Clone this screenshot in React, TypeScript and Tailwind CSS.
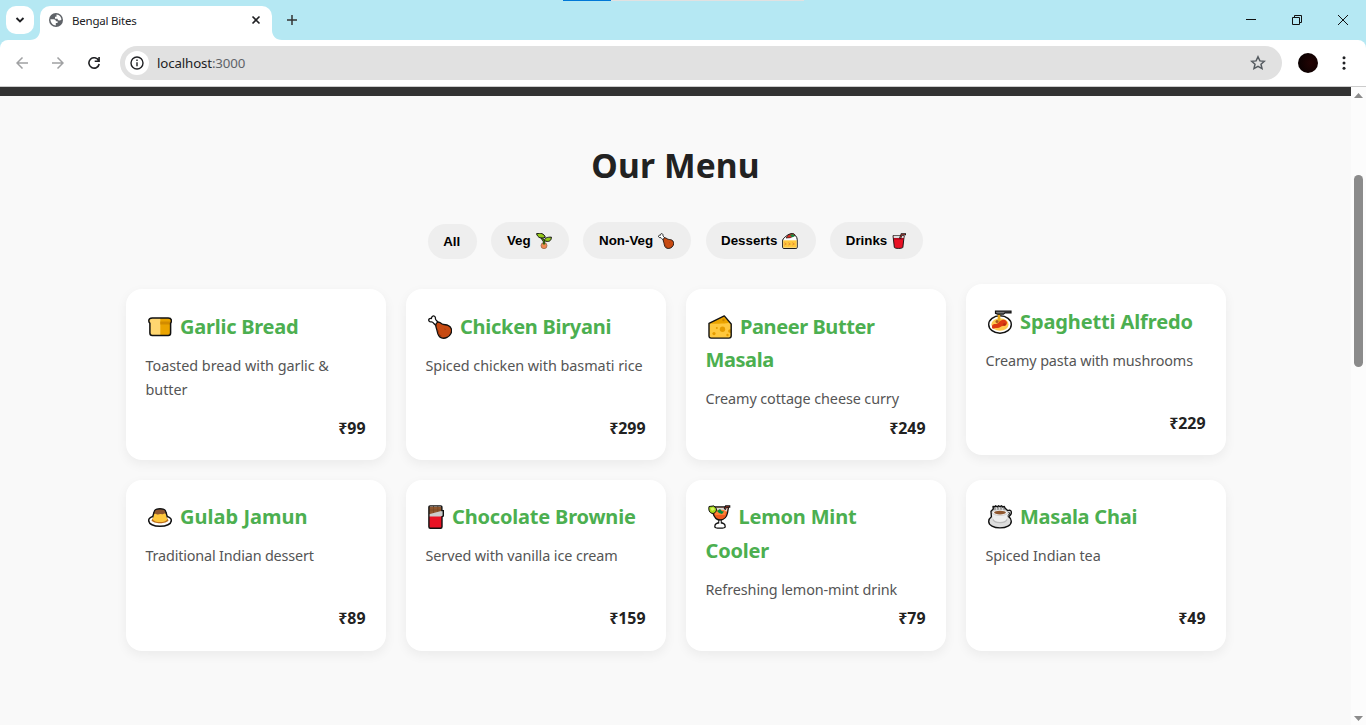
import type { ReactNode } from "react";

type IconName = "bread" | "drumstick" | "cheese" | "spaghetti" | "custard" | "chocolate" | "cocktail" | "coffee" | "sprout" | "cake" | "cup";

const drawings: Record<IconName, ReactNode> = {
  bread: (
    <>
      <path d="M4.300 2.900h15.900c2 0 3.200 1.200 3.200 2.800 0 1.200-.3 1.900-.8 2.500v9.800c0 1.600-.9 2.500-2.400 2.500H4.300c-1.500 0-2.400-.9-2.400-2.500V8.200C1.200 7.600.8 6.900.8 5.700c0-1.600 1.400-2.800 3.500-2.800z" fill="#eba400" />
      <path d="M4.300 3h8v17.500h-8c-1.500 0-2.400-.9-2.400-2.500V8.200L.8 5.700C.8 4.100 2.200 3 4.300 3z" fill="#ffd670" />
      <path d="M12.300 6.500H23v1.500l-1 1.500h-9.700z" fill="#d28b00" />
      <path d="M4.300 2.900h15.900c2 0 3.200 1.200 3.200 2.800 0 1.200-.3 1.900-.8 2.500v9.800c0 1.600-.9 2.500-2.400 2.500H4.300c-1.500 0-2.400-.9-2.400-2.500V8.200C1.200 7.600.8 6.900.8 5.700c0-1.600 1.400-2.800 3.500-2.800z" fill="none" stroke="#111" strokeWidth="1.500" />
    </>
  ),
  drumstick: (
    <g stroke="#111" strokeWidth="1.300" strokeLinejoin="round">
      <path d="M4.300 1.400c1.500-1.100 3.300 0 3.100 1.800-.1 1.100.4 1.700 1.300 2.600l2.700 3-2.800 2.500-3-3.100C4.900 7.200 4.300 6.700 3.100 6.900 1.400 7.100.1 5.400 1.100 4c.6-.7 1.400-.6 2.300-.5.200-.8.100-1.500.9-2.100z" fill="#fff" />
      <path d="M8.300 8.500c1.300-2.200 3.400-1.300 5.400.2 2 1.300 4.200.8 6.300 1.600 3.400 1.200 4.400 5.300 2.800 8.400-1.600 3.200-5.500 5.400-9.300 4.200-3.400-1-3.800-4-4.400-7-.5-2.700-2.200-5-.8-7.400z" fill="#c74a12" />
      <path d="M13.500 21c-2.700-.6-3-3.500-3.300-5.700M16.500 14l1 .4" stroke="#9d3508" strokeWidth="1" fill="none" />
    </g>
  ),
  cheese: (
    <>
      <path d="M1 8.300 16.300.9 23.200 9v11.800c0 1.500-.8 2.300-2.300 2.300H3.200C1.700 23.100 1 22.300 1 20.800z" fill="#ffc83d" />
      <path d="M1.500 8.200 16.200 1.200l5 6.300c-4 1.300-5 .8-7.700 1-3.500.2-8 .7-12-.3z" fill="#eba400" />
      <g fill="#e59c00"><circle cx="14.500" cy="14.200" r="2.700" /><circle cx="6" cy="18.600" r="1.600" /><circle cx="8.800" cy="13" r="1" /><circle cx="19.500" cy="20" r="1.200" /><path d="M23 18c-2 0-3-.8-2.800-2.200.2-1.300 1.500-1.500 2.800-1.500z" /></g>
      <circle cx="15.500" cy="5" r="1.200" fill="#c98500" />
      <path d="M1 8.300 16.300.9 23.200 9v11.800c0 1.500-.8 2.300-2.300 2.300H3.200C1.700 23.100 1 22.300 1 20.800z" fill="none" stroke="#111" strokeWidth="1.400" strokeLinejoin="round" />
    </>
  ),
  spaghetti: (
    <>
      <ellipse cx="12" cy="14.500" rx="11.300" ry="8.700" fill="#fff" stroke="#111" strokeWidth="1.400" />
      <ellipse cx="12" cy="14.500" rx="8.600" ry="6.200" fill="#ffc94f" />
      <path d="M11 1.800v10" stroke="#e8a71b" strokeWidth="2.600" />
      <path d="M4 17c0-3 2-3 4-3s3-3 6-4 5 1 5 3-2 3-4 3-3 2-6 2-5 2-5-1z" fill="#dd3a12" />
      <circle cx="9" cy="11.500" r="1.500" fill="#a85b20" /><circle cx="16.500" cy="14.500" r="1.300" fill="#b32b10" />
      <path d="M7.500 1.200H23v1.700h-6l-1.500 1.200h-6l-2-.8z" fill="#777" stroke="#111" strokeWidth="1.200" />
    </>
  ),
  custard: (
    <>
      <path d="M5 11.400c-2.600.8-4.300 2.100-4.300 4.100 0 3.500 5 5.800 11.300 5.800s11.300-2.300 11.300-5.800c0-2-1.700-3.300-4.300-4.100" fill="#fff" stroke="#111" strokeWidth="1.500" />
      <path d="M3.500 15.300c1.700 4 15.300 4 17 0L18 11.500H6z" fill="#bd701c" />
      <path d="M6.100 7h11.800l1.300 7.500c-1.500 3.400-12.900 3.400-14.400 0z" fill="#ffc83d" />
      <path d="M6 8.900c.3-2.800.8-4.200 2-4.400 2-.7 6-.7 8 0 1.200.3 1.700 1.500 2 4.400-1.600-1-2.300.8-4 .3-1.500-.5-2.500-.3-4 .2-1.700.5-2.400-1.100-4-.5z" fill="#8e562e" />
      <path d="M4.600 12.200 6 7.300c.3-1.700.9-2.600 2-2.900 2-.6 6-.6 8 0 1.100.3 1.700 1.200 2 2.900l1.400 4.900" fill="none" stroke="#111" strokeWidth="1.400" />
    </>
  ),
  chocolate: (
    <>
      <path d="M.9 1.700h13v20.700c0 .5-.3.800-.8.800H1.700c-.5 0-.8-.3-.8-.8z" fill="#8e562e" />
      <path d="M1.500 5h12M5.500 1v8M9.800 1v8" stroke="#75451f" strokeWidth=".7" />
      <path d="M1 11h13v12H1z" fill="#e81224" />
      <path d="M1 9.200 15 5.500v5.300L12.500 11.500H1z" fill="#ccc" />
      <path d="M13.900 5.500V2.400c0-1-.4-1.500-1.300-1.500H2.200c-.9 0-1.300.5-1.300 1.500v19.300c0 .9.500 1.500 1.400 1.500h10.300c.9 0 1.400-.5 1.400-1.500v-9.800l1.300-1V5.600z" fill="none" stroke="#111" strokeWidth="1.400" />
    </>
  ),
  cocktail: (
    <>
      <path d="M12 14v5.500" stroke="#111" strokeWidth="3.500" />
      <path d="M6.800 21.700c0-5.300 10.400-5.300 10.400 0 0 2-10.400 2-10.400 0z" fill="#fff" stroke="#111" strokeWidth="1.300" />
      <path d="M12 14v6" stroke="#fff" strokeWidth="1.500" />
      <path d="M4 2h16.500l-1 6c-.8 4.200-3.500 6.800-7.500 7-4-.2-6-3.200-7-7z" fill="#f05b1f" stroke="#111" strokeWidth="1.300" />
      <path d="M5.200 2.700h14.300l-.6 3.800H6z" fill="#ddd" />
      <path d="M6.500 5.800c2-1.500 10-1.500 11.500 0l-.7 4.200h-10z" fill="#ff8237" />
      <path d="M1 1.500 6 .9l2.500 3c.2 3-2 5-4.500 4.500C1.300 7.600.3 5 1 1.500z" fill="#a6d91c" stroke="#111" strokeWidth="1" />
      <path d="M2.500 3.500 5 2.300 7 4.300 4 6z" fill="#d8f562" />
      <path d="m9 6 3-2 2 2.200 2 .3-2 2.400-3-1z" fill="#008a3e" />
      <path d="m16.700 4.500 1.300-3h4.300" fill="none" stroke="#111" strokeWidth="2.300" /><path d="m17 4 1.200-2.300h3" fill="none" stroke="#a73a28" strokeWidth=".8" />
    </>
  ),
  coffee: (
    <>
      <path d="M3 6.200 5.300 4 5 1.500l2 .3.500-1 2 1 1-1 1.500.8 1.500-.8 1.200 1.200 1.600-.5L17 3l2.500 2.600 2.200-.5c1.900.3 2.100 2.800.9 4.700l-1.800 2c1.700 1 2.500 2.700 2.500 4.400 0 4.200-5 6.700-11.300 6.700S.7 20.200.7 16.500c0-2 1-3.500 2.700-4.700z" fill="#ddd" stroke="#111" strokeWidth="1.400" strokeLinejoin="round" />
      <path d="M7 2.500V5M10 2v3M13 2v3M16 3v2" stroke="#444" strokeWidth=".8" />
      <path d="M4 7.500c0 5.500 2.300 9.500 5.500 10.300h5c3.500-.8 5.200-4.800 5.500-10.300z" fill="#eee" />
      <ellipse cx="12" cy="7.600" rx="7.800" ry="2.800" fill="#f7f7f7" stroke="#aaa" strokeWidth=".5" />
      <ellipse cx="12" cy="7.600" rx="5.900" ry="1.800" fill="#8e562e" />
      <path d="M20.500 7.500c1.500-.5 1.500 2-1 3.500" fill="none" stroke="#111" strokeWidth="1" />
      <path d="M5 14.500c1.800 4.200 12.200 4.200 14 0" fill="none" stroke="#bbb" strokeWidth="1.200" />
    </>
  ),
  sprout: (
    <>
      <circle cx="12" cy="19" r="4.500" fill="#ef8853" stroke="#8b5b3b" strokeWidth="1" />
      <path d="M12 17v-5L8 6.500" fill="none" stroke="#111" strokeWidth="3.400" /><path d="M12 18v-6L8 6.500" fill="none" stroke="#63a514" strokeWidth="1.500" />
      <path d="M.8 1C6.500-.5 12 .5 14 6.500 7.500 8.500 3 7.800.8 1z" fill="#94c91a" stroke="#111" strokeWidth="1.500" />
      <path d="M12.500 11.500c.5-4 4-5.600 10.700-5.200-.4 6-4.200 7.700-10.700 5.200z" fill="#94c91a" stroke="#111" strokeWidth="1.500" />
    </>
  ),
  cake: (
    <>
      <path d="M1 10.500C3 6 10 1 15.500 1c3 0 7.300 5 7.300 8.500v11.800c0 1.300-.6 1.900-1.900 1.900H2.900c-1.300 0-1.900-.6-1.900-1.900z" fill="#fff" stroke="#111" strokeWidth="1.500" />
      <path d="M1.800 11h20.200v11H1.800z" fill="#ffc83d" />
      <path d="m3.500 14.500 3 2-3 1.500m6-3.500 3 2-3 1.500m6-3.500 3 2-3 1.500" stroke="#e58932" strokeWidth="1.300" fill="none" />
      <path d="M6 7.500C8 3 12 1 16 1c1.800 0 3 .8 3.500 2.500L12.500 7z" fill="#e42b20" stroke="#111" strokeWidth="1" />
      <path d="m11.500 3.500 5-2 2.500 3.500-3.500 1.500z" fill="#13883e" />
    </>
  ),
  cup: (
    <>
      <path d="M1.500 4h16.800l-2 17.500c-.2 2.200-12.600 2.200-12.800 0z" fill="#e81224" stroke="#111" strokeWidth="1.400" />
      <path d="M2.300 4h15.400l-.4 3.500H2.700z" fill="#ddd" /><path d="M3 7.500h14l-.3 2.500H3.300z" fill="#b70a1d" />
      <path d="M12 8.500 14.500 1.700H21" fill="none" stroke="#111" strokeWidth="3" /><path d="M12.300 8 14.600 2h5.300" fill="none" stroke="#b94740" strokeWidth="1.200" />
    </>
  ),
};

function FoodIcon({ name, className }: { name: IconName; className: string }) {
  return (
    <svg aria-hidden="true" viewBox={name === "chocolate" ? "0 0 16 24" : "0 0 24 24"} className={className}>
      {drawings[name]}
    </svg>
  );
}

interface Dish {
  icon: IconName;
  title: ReactNode;
  description: ReactNode;
  price: string;
  iconClass?: string;
  titleClass: string;
  descClass: string;
  raised?: boolean;
}

const dishes: Dish[] = [
  { icon: "bread", title: "Garlic Bread", description: <>Toasted bread with garlic &amp;<br />butter</>, price: "₹99", titleClass: "tracking-[-0.240px]", descClass: "tracking-[-0.030px]" },
  { icon: "drumstick", title: "Chicken Biryani", description: "Spiced chicken with basmati rice", price: "₹299", titleClass: "tracking-[-0.280px]", descClass: "tracking-[-0.040px]" },
  { icon: "cheese", title: <>Paneer Butter<br />Masala</>, description: "Creamy cottage cheese curry", price: "₹249", titleClass: "tracking-[-0.420px]", descClass: "tracking-[-0.100px]" },
  { icon: "spaghetti", title: "Spaghetti Alfredo", description: "Creamy pasta with mushrooms", price: "₹229", raised: true, titleClass: "tracking-[-0.120px]", descClass: "tracking-[-0.120px]" },
  { icon: "custard", title: "Gulab Jamun", description: "Traditional Indian dessert", price: "₹89", titleClass: "tracking-[0.020px]", descClass: "tracking-[-0.170px]" },
  { icon: "chocolate", title: "Chocolate Brownie", description: "Served with vanilla ice cream", price: "₹159", iconClass: "mr-2 w-4", titleClass: "tracking-[-0.190px]", descClass: "tracking-[-0.090px]" },
  { icon: "cocktail", title: <>Lemon Mint<br />Cooler</>, description: "Refreshing lemon-mint drink", price: "₹79", iconClass: "w-6 mr-[6.500px]", titleClass: "tracking-[-0.190px]", descClass: "tracking-[-0.100px]" },
  { icon: "coffee", title: "Masala Chai", description: "Spiced Indian tea", price: "₹49", titleClass: "tracking-[-0.240px]", descClass: "tracking-[-0.080px]" },
];

function DishCard({ dish }: { dish: Dish }) {
  return (
    <article className={`flex h-[171px] flex-col rounded-[16px] bg-white px-5 pt-[20.900px] pb-[19.400px] shadow-[0_4px_12px_rgba(0,0,0,0.06)] ${dish.raised ? "-translate-y-[5px]" : ""}`}>
      <h3 className={`whitespace-nowrap font-['Noto_Sans',sans-serif] text-[20px] leading-[33.300px] font-bold text-[#4caf50] ${dish.titleClass}`}>
        <FoodIcon name={dish.icon} className={`ml-[2.500px] inline-block h-6 align-[-5px] ${dish.iconClass ?? "mr-2 w-6"}`} />
        {dish.title}
      </h3>
      <p className={`mt-[10.600px] whitespace-nowrap font-['Noto_Sans',sans-serif] text-[14.400px] leading-[24.300px] text-[#555] ${dish.descClass}`}>{dish.description}</p>
      <p className="mt-auto text-right font-['Noto_Sans',sans-serif] text-[15.900px] leading-[26px] font-bold text-[#222]">{dish.price}</p>
    </article>
  );
}

function BrowserBar() {
  return (
    <header className="flex h-[87px] shrink-0 flex-col border-b border-[#ccc] bg-[#b5e8f3]">
      <div className="relative flex h-10 shrink-0">
        <div className="absolute top-0 left-[563px] flex h-px w-[241px] bg-[#e1e1e1]"><div className="w-12 bg-[#0078d7]" /></div>
        <div className="mt-1.5 ml-1.5 flex h-7 w-7 items-center justify-center rounded-[10px] bg-white">
          <svg className="h-3 w-3" viewBox="0 0 12 12" fill="none" stroke="#202124" strokeWidth="1.900"><path d="m2.500 4 3.500 3.500L9.500 4" /></svg>
        </div>
        <div className="relative mt-1.5 ml-1.5 flex h-[34px] w-[232px] items-start rounded-t-[10px] bg-white pt-[7px] pl-[9px]">
          <svg className="absolute bottom-0 -left-2.5 h-2.5 w-2.5" viewBox="0 0 10 10"><path d="M10 0v10H0C6 10 10 6 10 0z" fill="#fff" /></svg>
          <svg className="absolute -right-2.5 bottom-0 h-2.5 w-2.5" viewBox="0 0 10 10"><path d="M0 0v10h10C4 10 0 6 0 0z" fill="#fff" /></svg>
          <svg className="h-3.5 w-3.5" viewBox="0 0 14 14"><circle cx="7" cy="7" r="7" fill="#5f6368" /><path d="M7.500 1.400c2.800.2 4.800 2.400 5 5.200l-1.500.8-2-.2-.5-1.500H6V3.800h1.500z" fill="#fff" /><path d="M1.400 6.300h3.300c1.400 0 2.200.7 2.200 2h1.700v1.800H6.800v2.500C4 12.400 1.500 10 1.400 6.300z" fill="#fff" /></svg>
          <span className="ml-[9px] font-['Noto_Sans',sans-serif] text-[11.500px] leading-[15px] tracking-[-0.210px] text-[#202124]">Bengal Bites</span>
          <svg className="mt-[2px] mr-[11px] ml-auto h-2.5 w-2.5" viewBox="0 0 10 10" stroke="#202124" strokeWidth="1.600"><path d="m1.500 1.500 7 7m0-7-7 7" /></svg>
        </div>
        <svg className="mt-[15px] ml-[15px] h-2.5 w-2.5" viewBox="0 0 10 10" stroke="#333" strokeWidth="1.500"><path d="M5 0v10M0 5h10" /></svg>
        <div className="mt-[14px] mr-[18px] ml-auto flex h-3 items-center gap-9">
          <svg className="h-2.5 w-2.5" viewBox="0 0 10 10" stroke="#111"><path d="M0 4.500h10" /></svg>
          <svg className="h-2.5 w-2.5" viewBox="0 0 10 10" stroke="#111" fill="none"><path d="M.5 2.500h7v7h-7zM2.500 2.500v-2h7v7h-2" /></svg>
          <svg className="h-2.5 w-2.5" viewBox="0 0 10 10" stroke="#111"><path d="m0 0 10 10m0-10L0 10" /></svg>
        </div>
      </div>
      <div className="flex h-[46px] items-center rounded-t-[8px] bg-white pl-4">
        <svg className="h-3 w-3" viewBox="0 0 12 12" fill="none" stroke="#a0a1a3" strokeWidth="1.500"><path d="M12 6H1m5.500-5.500L1 6l5.500 5.500" /></svg>
        <svg className="ml-6 h-3 w-3" viewBox="0 0 12 12" fill="none" stroke="#a0a1a3" strokeWidth="1.500"><path d="M0 6h11M5.500.5 11 6l-5.500 5.500" /></svg>
        <svg className="ml-6 h-3 w-3" viewBox="0 0 12 12" fill="none" stroke="#202124" strokeWidth="1.600"><path d="M10.700 3.500A5.200 5.200 0 1 0 11.200 7M11.100 0v4.300H6.700" /></svg>
        <div className="ml-5 flex h-[34px] w-[1162px] items-center rounded-full bg-[#e1e1e1] pl-[5px]">
          <div className="flex h-6 w-6 items-center justify-center rounded-full bg-white">
            <svg className="h-3.5 w-3.5" viewBox="0 0 14 14" fill="none" stroke="#202124" strokeWidth="1.400"><circle cx="7" cy="7" r="6" /><path d="M7 6.300v4M7 3.400V5" /></svg>
          </div>
          <span className="ml-2 font-['Noto_Sans',sans-serif] text-[13.300px] leading-5 tracking-[-0.140px] text-[#202124]">localhost<span className="text-[#5f6368]">:3000</span></span>
          <svg className="mr-4 ml-auto h-4 w-4" viewBox="0 0 16 16" fill="none" stroke="#555b60" strokeWidth="1.500"><path d="m8 1.800 1.900 4.100 4.400.4-3.300 2.900 1 4.400L8 11.300l-4 2.300 1-4.400-3.300-2.900 4.400-.4z" /></svg>
        </div>
        <div className="ml-4 h-5 w-5 rounded-full bg-[radial-gradient(circle_at_65%_50%,#230303,#030000)]" />
        <svg className="ml-[18px] h-4 w-4" viewBox="0 0 16 16" fill="#202124"><circle cx="8" cy="2.700" r="1.500" /><circle cx="8" cy="8" r="1.500" /><circle cx="8" cy="13.300" r="1.500" /></svg>
      </div>
    </header>
  );
}

const filters: { label: string; icon?: IconName; width: string }[] = [
  { label: "All", width: "w-[49px] h-[35px] pl-[15px]" },
  { label: "Veg", icon: "sprout", width: "w-[77.600px] h-[37px] pl-[15.500px] pt-[1.500px]" },
  { label: "Non-Veg", icon: "drumstick", width: "w-[108px] h-[37px] pl-[15.800px] pt-[1.500px]" },
  { label: "Desserts", icon: "cake", width: "w-[110px] h-[37px] pl-[15.500px] pt-[1.500px]" },
  { label: "Drinks", icon: "cup", width: "w-[93px] h-[37px] pl-4 pt-[1.500px]" },
];

export default function App() {
  return (
    <div className="flex h-[725px] w-[1366px] flex-col overflow-hidden bg-[#f9f9f9]">
      <BrowserBar />
      <div className="flex min-h-0 flex-1">
        <main className="w-[1351px]">
          <div className="h-[9px] bg-[#333]" />
          <h2 className="mt-[41px] text-center font-['Noto_Sans',sans-serif] text-[33.500px] leading-[56px] font-bold tracking-[0.150px] text-[#222]">Our Menu</h2>
          <nav className="mt-[29px] flex h-[37px] items-end justify-center gap-[14.250px]">
            {filters.map((filter) => (
              <button key={filter.label} className={`flex items-center rounded-[20px] bg-[#eee] font-['Liberation_Sans',Arial,sans-serif] text-[13.333px] font-bold text-black ${filter.width}`}>
                {filter.label}
                {filter.icon && <FoodIcon name={filter.icon} className="-mt-px ml-[5px] h-4 w-4" />}
              </button>
            ))}
          </nav>
          <section className="mt-[30px] ml-[125.500px] grid w-[1100px] grid-cols-4 gap-x-5 gap-y-[19.600px]">
            {dishes.map((dish) => <DishCard key={dish.price} dish={dish} />)}
          </section>
        </main>
        <aside className="flex w-[15px] flex-col items-center bg-[#fcfcfc]">
          <svg className="mt-1.5 h-[5px] w-[9px]" viewBox="0 0 9 5" fill="#8b8b8b"><path d="M4.500 0 9 5H0z" /></svg>
          <div className="mt-[77px] h-48 w-[9px] rounded-full bg-[#8b8b8b]" />
          <svg className="mt-auto mb-1 h-[5px] w-[9px]" viewBox="0 0 9 5" fill="#8b8b8b"><path d="M0 0h9L4.500 5z" /></svg>
        </aside>
      </div>
    </div>
  );
}
